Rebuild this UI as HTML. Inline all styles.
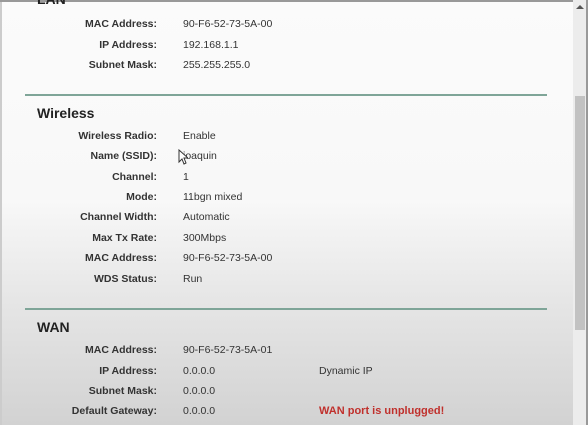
<!DOCTYPE html>
<html><head><style>
html,body{margin:0;padding:0}
body{width:588px;height:425px;overflow:hidden;position:relative;font-family:"Liberation Sans",Arial,sans-serif;
background:linear-gradient(to bottom,#fbfbfb 0px,#f8f8f8 200px,#e6e6e6 300px,#d2d2d2 425px);}
.l{position:absolute;right:431px;font-size:10.5px;font-weight:bold;color:#333;white-space:nowrap;transform:translateY(-50%);margin-top:1px}
.v{position:absolute;left:183px;font-size:10.5px;color:#333;white-space:nowrap;transform:translateY(-50%);margin-top:1px}
.h{position:absolute;left:37px;font-size:14px;font-weight:bold;color:#222;transform:translateY(-50%);margin-top:1px}
.hr{position:absolute;left:25px;width:522px;height:2px;background:#7fa598}
.sb{position:absolute;left:573px;top:0;width:13px;height:425px;background:#ececec}
.th{position:absolute;left:575px;top:96px;width:10px;height:234px;background:#c2c2c2}
</style></head><body>
<div style="position:absolute;left:0;top:0;width:2px;height:425px;background:#ccc"></div>
<div style="position:absolute;left:0;top:0;width:588px;height:2px;background:#999"></div>
<div class="h" style="top:-2px">LAN</div>
<div class="l" style="top:23px">MAC Address:</div><div class="v" style="top:23px">90-F6-52-73-5A-00</div>
<div class="l" style="top:44px">IP Address:</div><div class="v" style="top:44px">192.168.1.1</div>
<div class="l" style="top:64px">Subnet Mask:</div><div class="v" style="top:64px">255.255.255.0</div>
<div class="hr" style="top:94px"></div>
<div class="h" style="top:112px">Wireless</div>
<div class="l" style="top:135px">Wireless Radio:</div><div class="v" style="top:135px">Enable</div>
<div class="l" style="top:155px">Name (SSID):</div><div class="v" style="top:155px">joaquin</div>
<div class="l" style="top:176px">Channel:</div><div class="v" style="top:176px">1</div>
<div class="l" style="top:196px">Mode:</div><div class="v" style="top:196px">11bgn mixed</div>
<div class="l" style="top:216px">Channel Width:</div><div class="v" style="top:216px">Automatic</div>
<div class="l" style="top:237px">Max Tx Rate:</div><div class="v" style="top:237px">300Mbps</div>
<div class="l" style="top:257px">MAC Address:</div><div class="v" style="top:257px">90-F6-52-73-5A-00</div>
<div class="l" style="top:278px">WDS Status:</div><div class="v" style="top:278px">Run</div>
<div class="hr" style="top:308px"></div>
<div class="h" style="top:326px">WAN</div>
<div class="l" style="top:349px">MAC Address:</div><div class="v" style="top:349px">90-F6-52-73-5A-01</div>
<div class="l" style="top:370px">IP Address:</div><div class="v" style="top:370px">0.0.0.0</div>
<div class="v" style="top:370px;left:319px">Dynamic IP</div>
<div class="l" style="top:390px">Subnet Mask:</div><div class="v" style="top:390px">0.0.0.0</div>
<div class="l" style="top:410px">Default Gateway:</div><div class="v" style="top:410px">0.0.0.0</div>
<div class="v" style="top:410px;left:319px;color:#c0302c;font-weight:bold;font-size:11px">WAN port is unplugged!</div>
<svg style="position:absolute;left:178px;top:149px" width="10" height="16" viewBox="0 0 10 16"><path d="M1 1 L1 13 L4 10 L6 15 L8 14 L6 9 L10 9 Z" fill="#fff" stroke="#333" stroke-width="1"/></svg>
<div class="sb"></div>
<div class="th"></div>
<div style="position:absolute;left:576px;top:5px;width:0;height:0;border-left:4px solid transparent;border-right:4px solid transparent;border-bottom:4px solid #555"></div>
<div style="position:absolute;left:586px;top:0;width:2px;height:425px;background:#999"></div>
</body></html>
